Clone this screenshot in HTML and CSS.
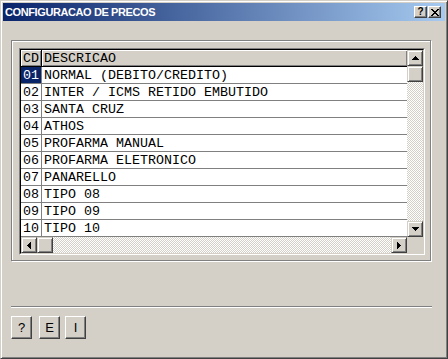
FILE: index.html
```html
<!DOCTYPE html>
<html lang="pt">
<head>
    <meta charset="UTF-8">
    <title>CONFIGURACAO DE PRECOS</title>
    <link rel="stylesheet" href="styles.css">
</head>
<body>
    <div class="window">
        <div class="titlebar">
            <span class="title">CONFIGURACAO DE PRECOS</span>
            <div class="title-buttons">
                <div class="tbtn">?</div>
                <div class="tbtn close">
                    <svg width="8" height="7" viewBox="0 0 8 7"><path d="M0 0h2v1H0zM6 0h2v1H6zM1 1h2v1H1zM5 1h2v1H5zM2 2h4v1H2zM3 3h2v1H3zM2 4h4v1H2zM1 5h2v1H1zM5 5h2v1H5zM0 6h2v1H0zM6 6h2v1H6z"/></svg>
                </div>
            </div>
        </div>

        <div class="client">
            <div class="group">
                <div class="grid">
                    <div class="grid-in">
                        <div class="cells">
                            <div class="row head"><div class="cd">CD</div><div class="desc">DESCRICAO</div></div>
                            <div class="row"><div class="cd sel">01</div><div class="desc">NORMAL (DEBITO/CREDITO)</div></div>
                            <div class="row"><div class="cd">02</div><div class="desc">INTER / ICMS RETIDO EMBUTIDO</div></div>
                            <div class="row"><div class="cd">03</div><div class="desc">SANTA CRUZ</div></div>
                            <div class="row"><div class="cd">04</div><div class="desc">ATHOS</div></div>
                            <div class="row"><div class="cd">05</div><div class="desc">PROFARMA MANUAL</div></div>
                            <div class="row"><div class="cd">06</div><div class="desc">PROFARMA ELETRONICO</div></div>
                            <div class="row"><div class="cd">07</div><div class="desc">PANARELLO</div></div>
                            <div class="row"><div class="cd">08</div><div class="desc">TIPO 08</div></div>
                            <div class="row"><div class="cd">09</div><div class="desc">TIPO 09</div></div>
                            <div class="row"><div class="cd">10</div><div class="desc">TIPO 10</div></div>
                        </div>

                        <div class="vscroll">
                            <div class="sbtn"><svg width="7" height="4" viewBox="0 0 7 4"><path d="M3 0h1v1h1v1h1v1h1v1H0V3h1V2h1V1h1z"/></svg></div>
                            <div class="sbtn"></div>
                            <div class="track"></div>
                            <div class="sbtn"><svg width="7" height="4" viewBox="0 0 7 4"><path d="M0 0h7v1H6v1H5v1H4v1H3V3H2V2H1V1H0z"/></svg></div>
                        </div>

                        <div class="hscroll">
                            <div class="sbtn"><svg width="4" height="7" viewBox="0 0 4 7"><path d="M3 0h1v7H3V6H2V5H1V4H0V3h1V2h1V1h1z"/></svg></div>
                            <div class="sbtn"></div>
                            <div class="track"></div>
                            <div class="sbtn"><svg width="4" height="7" viewBox="0 0 4 7"><path d="M0 0h1v1h1v1h1v1h1v1H3v1H2v1H1v1H0z"/></svg></div>
                        </div>

                        <div class="corner"></div>
                    </div>
                </div>
            </div>

            <div class="sep"></div>

            <div class="buttons">
                <button class="btn">?</button>
                <button class="btn btn-e">E</button>
                <button class="btn btn-i">I</button>
            </div>
        </div>
    </div>
</body>
</html>
```

FILE: styles.css
```css
* {
    box-sizing: border-box;
}
body {
    margin: 0;
    background: #d4d0c8;
    font-family: "Liberation Sans", Arial, sans-serif;
}
.window {
    width: 448px;
    height: 359px;
    background: #d4d0c8;
    border: 1px solid;
    border-color: #d4d0c8 #404040 #404040 #d4d0c8;
    box-shadow: inset 1px 1px #fff, inset -1px -1px #808080;
    padding: 2px;
    display: flex;
    flex-direction: column;
}
.titlebar {
    height: 18px;
    background: linear-gradient(to right, #0a246a, #a6caf0);
    display: flex;
    align-items: center;
    justify-content: space-between;
    padding: 0 4px 0 2px;
}
.title {
    color: white;
    font-weight: bold;
    font-size: 11px;
    letter-spacing: -0.4px;
    line-height: 18px;
    white-space: nowrap;
}
.title-buttons {
    display: flex;
    gap: 1px;
}
.tbtn {
    width: 13px;
    height: 12px;
    background: #d4d0c8;
    border: 1px solid;
    border-color: #fff #404040 #404040 #fff;
    box-shadow: inset -1px -1px #808080;
    display: flex;
    align-items: center;
    justify-content: center;
    font-weight: bold;
    font-size: 10px;
    line-height: 10px;
    color: #000;
}
.client {
    flex: 1;
    padding: 19px 0 0 8px;
}
.group {
    width: 420px;
    height: 221px;
    border: 1px solid #808080;
    box-shadow: inset 1px 1px #fff, 1px 1px #fff;
    padding: 7px 0 0 7px;
}
.grid {
    width: 406px;
    height: 207px;
    border: 1px solid;
    border-color: #808080 #fff #fff #808080;
}
.grid-in {
    height: 100%;
    border: 1px solid;
    border-color: #000 #d4d0c8 #d4d0c8 #000;
    display: grid;
    grid-template-columns: 386px 16px;
    grid-template-rows: 187px 16px;
    background: #fff;
}
.cells {
    overflow: hidden;
    background: #fff;
    font-family: "Liberation Mono", "Courier New", monospace;
    font-size: 13.333px;
    color: #000;
}
.row {
    display: flex;
    height: 17px;
    line-height: 18px;
    border-bottom: 1px solid #808080;
    white-space: nowrap;
    overflow: hidden;
}
.cd {
    width: 21px;
    border-right: 1px solid #808080;
    padding-left: 2px;
}
.desc {
    flex: 1;
    padding-left: 2px;
}
.head {
    background: #d4d0c8;
    border-bottom-color: #000;
}
.head .cd,
.head .desc {
    box-shadow: inset 1px 1px #fff, inset -1px -1px #808080;
}
.head .cd {
    border-right-color: #000;
}
.sel {
    background: #0a246a;
    color: #fff;
}
.vscroll {
    display: flex;
    flex-direction: column;
}
.hscroll {
    display: flex;
}
.sbtn {
    width: 16px;
    height: 16px;
    flex-shrink: 0;
    background: #d4d0c8;
    border: 1px solid;
    border-color: #d4d0c8 #404040 #404040 #d4d0c8;
    box-shadow: inset 1px 1px #fff, inset -1px -1px #808080;
    display: flex;
    align-items: center;
    justify-content: center;
}
.sbtn svg {
    display: block;
}
.track {
    flex: 1;
    background: repeating-conic-gradient(#d4d0c8 0 25%, #fff 0 50%) 0 0 / 2px 2px;
}
.corner {
    background: #d4d0c8;
}
.sep {
    width: 421px;
    margin-top: 45px;
    border-top: 1px solid #808080;
    border-bottom: 1px solid #fff;
}
.buttons {
    display: flex;
    margin-top: 8px;
}
.btn {
    width: 21px;
    height: 23px;
    padding: 0;
    background: #d4d0c8;
    border: 1px solid;
    border-color: #fff #404040 #404040 #fff;
    box-shadow: inset -1px -1px #808080;
    font-family: "Liberation Sans", Arial, sans-serif;
    font-size: 13px;
    color: #000;
}
.btn-e {
    margin-left: 7px;
}
.btn-i {
    margin-left: 5px;
}
```
